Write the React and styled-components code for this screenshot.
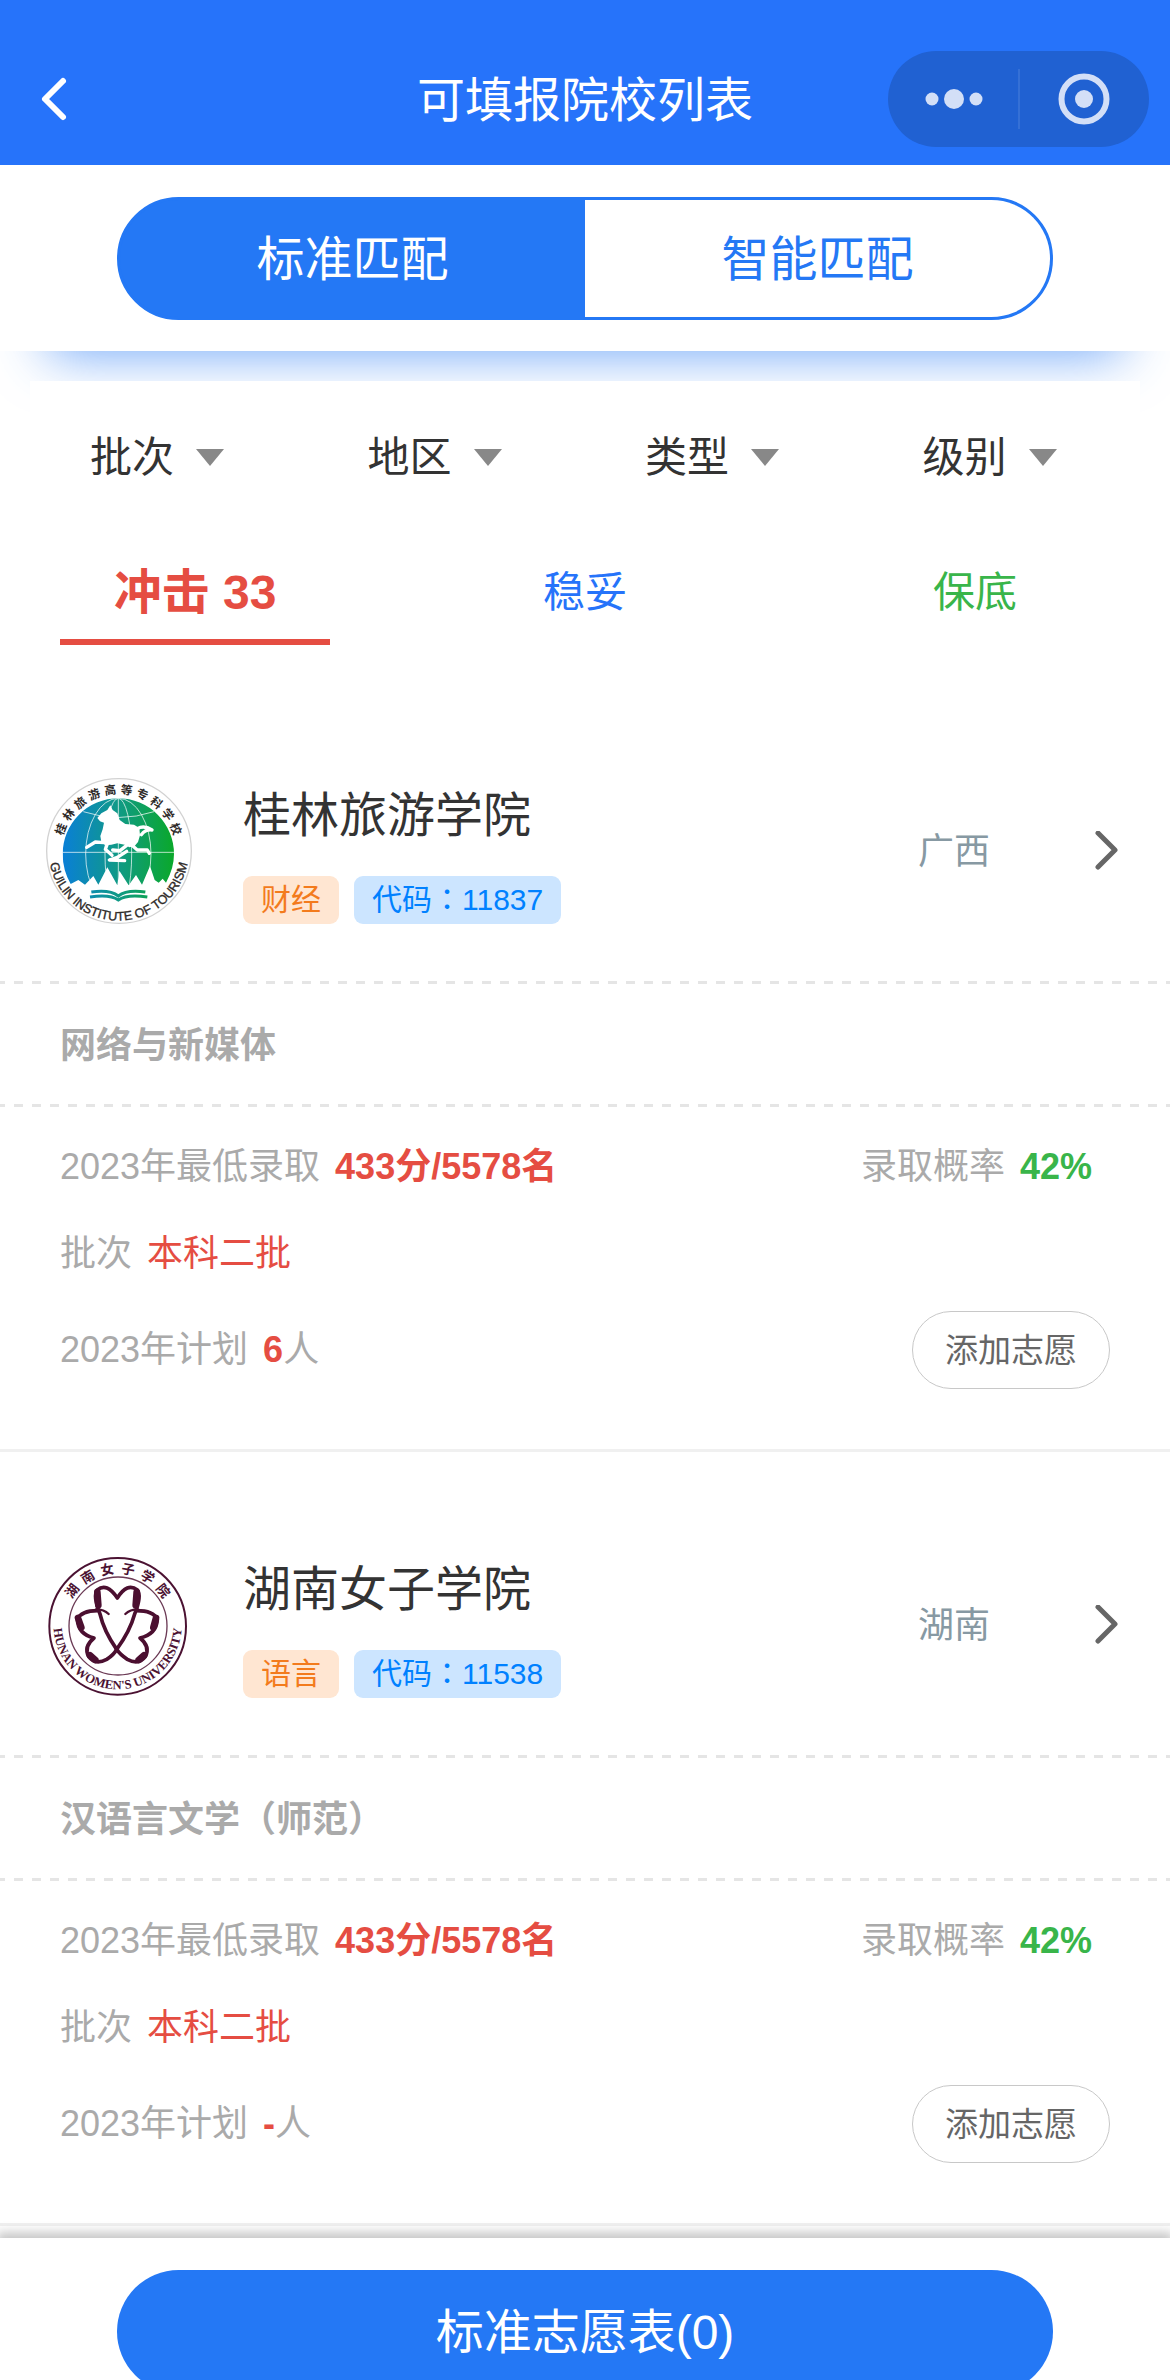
import React, { useState } from 'react';
import styled, { createGlobalStyle } from 'styled-components';

const GlobalStyle = createGlobalStyle`
  * {
    box-sizing: border-box;
  }
  body {
    margin: 0;
    background: #fff;
    color: #333;
    font-family: 'Liberation Sans', 'Noto Sans CJK SC', sans-serif;
    font-size: 36px;
    line-height: 1.5;
  }
  button,
  select {
    margin: 0;
    padding: 0;
    border: 0;
    background: none;
    color: inherit;
    font: inherit;
    cursor: pointer;
  }
  a {
    color: inherit;
    text-decoration: none;
  }
  h1,
  h2,
  h3 {
    margin: 0;
    font-weight: 400;
  }
  svg {
    display: block;
  }
`;

const Page = styled.div`
  display: flex;
  flex-direction: column;
  height: 100vh;
  overflow: hidden;
`;

const NavBar = styled.header`
  display: grid;
  grid-template-columns: 1fr auto 1fr;
  align-items: center;
  flex: none;
  height: 165px;
  padding: 33px 21px 0;
  background: #2673fa;
  color: #fff;
`;

const Title = styled.h1`
  padding-top: 3px;
  font-size: 48px;
  line-height: 72px;
`;

const BackButton = styled.button`
  justify-self: start;
  padding-left: 15px;
`;

const Capsule = styled.div`
  display: flex;
  justify-self: end;
  align-items: center;
  width: 261px;
  height: 96px;
  border-radius: 48px;
  background: #2061d2;
`;

const CapsuleButton = styled.button`
  display: flex;
  flex: 1;
  justify-content: center;
`;

const CapsuleLine = styled.span`
  width: 2px;
  height: 60px;
  background: #3570d6;
`;

const ModeBar = styled.div`
  flex: none;
  padding: 32px 10% 31px;
  background: #fff;
  box-shadow: 0 51px 54px -48px rgba(36, 120, 245, 0.66);
`;

const ModeSwitch = styled.div`
  display: flex;
  height: 123px;
  border: 3px solid #2478f5;
  border-radius: 62px;
  background: #2478f5;
  overflow: hidden;
`;

const ModeButton = styled.button`
  flex: 1;
  padding-top: 3px;
  font-size: 48px;
  background: ${p => (p.$active ? '#2478f5' : '#fff')};
  color: ${p => (p.$active ? '#fff' : '#2478f5')};
`;

const Content = styled.main`
  flex: 1;
  min-height: 0;
  padding-top: 30px;
  overflow-y: auto;
`;

const Filters = styled.div`
  display: grid;
  grid-template-columns: repeat(4, 1fr);
  align-items: center;
  height: 153px;
  margin: 0 30px;
  background: #fff;
`;

const FilterLabel = styled.label`
  display: flex;
  align-items: center;
  padding-left: 60px;
`;

const FilterSelect = styled.select`
  appearance: none;
  height: 63px;
  padding-right: 49px;
  font-size: 42px;
`;

const Caret = styled.span`
  margin-left: -28px;
  border: 14px solid transparent;
  border-top: 17px solid #888;
  border-bottom: 0;
  pointer-events: none;
`;

const Tabs = styled.div`
  display: grid;
  grid-template-columns: repeat(3, 1fr);
  margin: 9px 0 33px;
`;

const Tab = styled.button`
  justify-self: center;
  width: 270px;
  height: 102px;
  padding-top: 3px;
  border-bottom: 6px solid ${p => (p.$active ? p.$color : 'transparent')};
  color: ${p => p.$color};
  font-size: ${p => (p.$active ? 48 : 42)}px;
  font-weight: ${p => (p.$active ? 700 : 400)};
`;

const Card = styled.article`
  border-bottom: 3px solid #f0f0f0;
`;

const SchoolLink = styled.a`
  display: flex;
  align-items: center;
  padding: 99px 51px 54px 45px;
`;

const SchoolText = styled.div`
  flex: 1;
  margin-left: 48px;
`;

const SchoolName = styled.h2`
  font-size: 48px;
  line-height: 72px;
`;

const Tags = styled.div`
  display: flex;
  gap: 15px;
  margin-top: 24px;
`;

const Tag = styled.span`
  height: 48px;
  padding: 0 18px;
  border-radius: 9px;
  background: ${p => (p.$blue ? '#cce5ff' : '#ffe6d2')};
  color: ${p => (p.$blue ? '#0081ff' : '#f37b1d')};
  font-size: 30px;
  line-height: 48px;
`;

// the TC face keeps the full-width colon in the middle of its box
const Colon = styled.span`
  font-family: 'Noto Sans CJK TC', sans-serif;
  line-height: 1;
`;

const Region = styled.span`
  margin-right: 105px;
  color: #8799a3;
`;

const Dashes = styled.div`
  height: 3px;
  background: repeating-linear-gradient(
    90deg,
    #e5e5e5 0 5px,
    transparent 5px 14px,
    #e5e5e5 14px 18px
  );
`;

const Major = styled.h3`
  padding: 3px 60px 0;
  color: #aaa;
  font-size: 36px;
  font-weight: 700;
  line-height: 117px;
`;

const Details = styled.div`
  display: flex;
  flex-direction: column;
  gap: 30px;
  padding: 30px 60px 60px;
  color: #aaa;
`;

const DetailRow = styled.div`
  display: flex;
  align-items: center;
  justify-content: space-between;
  min-height: 57px;
  padding-top: ${p => (p.$action ? 0 : 3)}px;
`;

const Value = styled.span`
  margin-left: 15px;
  color: ${p => (p.$green ? '#39b54a' : '#e54d42')};
  font-weight: ${p => (p.$plain ? 400 : 700)};
`;

const Chance = styled.span`
  margin-right: 18px;
`;

const AddButton = styled.button`
  height: 78px;
  padding: 2px 32px 0;
  border: 1px solid #c8c8c8;
  border-radius: 39px;
  color: #666;
  font-size: 33px;
`;

const Footer = styled.footer`
  flex: none;
  height: 142px;
  padding: 32px 10% 0;
  background: #fff;
  box-shadow: 0 -3px 10px 3px #c8c8c8;
  overflow: hidden;
`;

const SubmitButton = styled.button`
  width: 100%;
  height: 123px;
  padding-top: 3px;
  border-radius: 62px;
  background: #2478f5;
  color: #fff;
  font-size: 48px;
`;

const RingText = ({ text, cx, cy, r, from, to, size }) =>
  [...text].map((char, i) => (
    <text
      key={char}
      x={cx}
      y={cy - r}
      fontSize={size}
      fontWeight="700"
      textAnchor="middle"
      transform={`rotate(${from + ((to - from) * i) / (text.length - 1)} ${cx} ${cy})`}
    >
      {char}
    </text>
  ));

const GuilinLogo = () => (
  <svg width="150" height="150" viewBox="45 51 450 450" aria-hidden="true">
    <defs>
      <linearGradient
        id="globe"
        gradientUnits="userSpaceOnUse"
        x1="98"
        x2="432"
        y1="0"
        y2="0"
      >
        <stop offset="0" stopColor="#0a7fd6" />
        <stop offset="0.5" stopColor="#109a86" />
        <stop offset="1" stopColor="#0aa82a" />
      </linearGradient>
      <clipPath id="globeClip">
        <path d="M122 372Q98 330 98 282A167 167 0 0 1 432 282Q432 325 408 368L398 356L386 368L374 360L360 318L336 374L318 345L296 376L268 332L262 376L232 322L205 374L190 348L165 374L145 360Z" />
      </clipPath>
      <path id="guilinArc" d="M56 272A210 210 0 0 0 476 272" />
    </defs>
    <circle cx="267" cy="273" r="217" fill="#fff" stroke="#d2d2d2" strokeWidth="4" />
    <g clipPath="url(#globeClip)">
      <rect x="95" y="110" width="340" height="275" fill="url(#globe)" />
      <g fill="none" stroke="#fff" strokeOpacity="0.7" strokeWidth="3">
        <path d="M98 277H432M265 115V390" />
        <path d="M160 155Q265 190 372 155" />
        <ellipse cx="265" cy="282" rx="98" ry="167" />
        <ellipse cx="265" cy="282" rx="40" ry="167" />
      </g>
    </g>
    <path
      fill="#fff"
      d="M241 136L248 150L262 160L269 180L286 192L312 194L328 204L330 226L324 246L314 258L298 262L284 254L262 250L244 254L226 256L214 246L211 228L218 208L222 188L210 184L202 174L214 160L232 150Z"
    />
    <g
      fill="none"
      stroke="#fff"
      strokeWidth="10"
      strokeLinecap="round"
      strokeLinejoin="round"
    >
      <path d="M322 206Q342 194 366 210Q346 208 334 224" />
      <path d="M306 256L322 270L352 270L358 280" />
      <path d="M290 256L270 272L248 270" />
      <path d="M222 248L196 246L170 262" />
      <path d="M232 252L226 268L246 286" />
      <path d="M290 274L262 292L238 300L284 302" />
    </g>
    <g fill="none" stroke="url(#globe)" strokeWidth="9">
      <path d="M184 396Q240 388 265 408Q290 388 346 396" />
      <path d="M180 411Q240 402 265 420Q290 402 352 411" />
    </g>
    <g fill="#2e2a28">
      <RingText text="桂林旅游高等专科学校" cx={265} cy={273} r={172} from={-69} to={69} size={35} />
      <text fontSize="38" textAnchor="middle" stroke="#2e2a28">
        <textPath href="#guilinArc" startOffset="50%">
          GUILIN INSTITUTE OF TOURISM
        </textPath>
      </text>
    </g>
  </svg>
);

const HunanLogo = () => (
  <svg width="150" height="150" viewBox="45 33 450 450" aria-hidden="true">
    <defs>
      <path id="hunanArc" d="M74 222A192 192 0 1 0 452 222" />
    </defs>
    <circle cx="263" cy="259" r="205" fill="#fff" stroke="#4b1232" strokeWidth="6" />
    <circle cx="264" cy="258" r="147" fill="none" stroke="#6b3a55" strokeWidth="4" />
    <g fill="none" stroke="#4b0f30" strokeLinecap="round" strokeLinejoin="round">
      <g strokeWidth="11">
        <path d="M260 328Q222 274 210 222Q188 168 202 150Q230 126 262 174Q292 126 322 150Q336 168 314 222Q300 274 260 328" />
        <path d="M202 212Q154 212 142 238Q144 282 192 294Q160 320 176 350Q196 376 230 358Q252 344 260 328" />
        <path d="M320 212Q370 212 382 238Q380 282 330 294Q362 320 346 350Q326 376 292 358Q270 344 260 328" />
      </g>
      <path strokeWidth="7" d="M198 208Q222 208 236 222M324 208Q300 208 286 222" />
      <path
        strokeWidth="20"
        d="M202 156L205 196M320 156L317 196M144 234L154 262M378 234L370 262M180 346L196 360M342 346L326 360"
      />
    </g>
    <g fill="#4b1232">
      <RingText text="湖南女子学院" cx={263} cy={259} r={159} from={-52} to={52} size={40} />
      <text
        fontFamily="Liberation Serif, serif"
        fontSize="38"
        fontWeight="700"
        textAnchor="middle"
      >
        <textPath href="#hunanArc" startOffset="50%">
          HUNAN WOMEN'S UNIVERSITY
        </textPath>
      </text>
    </g>
  </svg>
);

const filters = ['批次', '地区', '类型', '级别'];

const levels = [
  { name: '冲击', count: 33, color: '#e54d42' },
  { name: '稳妥', color: '#2673fa' },
  { name: '保底', color: '#39b54a' },
];

const schools = [
  {
    name: '桂林旅游学院',
    Logo: GuilinLogo,
    type: '财经',
    code: '11837',
    region: '广西',
    major: '网络与新媒体',
    plan: '6',
  },
  {
    name: '湖南女子学院',
    Logo: HunanLogo,
    type: '语言',
    code: '11538',
    region: '湖南',
    major: '汉语言文学（师范）',
    plan: '-',
  },
];

const SchoolCard = ({ school }) => {
  const { Logo } = school;
  return (
    <Card>
      <SchoolLink href={`#${school.code}`}>
        <Logo />
        <SchoolText>
          <SchoolName>{school.name}</SchoolName>
          <Tags>
            <Tag>{school.type}</Tag>
            <Tag $blue>
              代码<Colon>：</Colon>
              {school.code}
            </Tag>
          </Tags>
        </SchoolText>
        <Region>{school.region}</Region>
        <svg width="24" height="42" fill="none" stroke="#666" strokeWidth="5">
          <path d="M3 2L20 19L3 36" strokeLinecap="round" strokeLinejoin="round" />
        </svg>
      </SchoolLink>
      <Dashes />
      <Major>{school.major}</Major>
      <Dashes />
      <Details>
        <DetailRow>
          <span>
            2023年最低录取<Value>433分/5578名</Value>
          </span>
          <Chance>
            录取概率<Value $green>42%</Value>
          </Chance>
        </DetailRow>
        <DetailRow>
          <span>
            批次<Value $plain>本科二批</Value>
          </span>
        </DetailRow>
        <DetailRow $action>
          <span>
            2023年计划<Value>{school.plan}</Value>人
          </span>
          <AddButton type="button">添加志愿</AddButton>
        </DetailRow>
      </Details>
    </Card>
  );
};

const App = () => {
  const [mode, setMode] = useState('标准匹配');
  const [level, setLevel] = useState('冲击');

  return (
    <Page>
      <GlobalStyle />
      <NavBar>
        <BackButton type="button" aria-label="返回">
          <svg width="36" height="48" fill="none" stroke="#fff" strokeWidth="6">
            <path d="M27 6L9 24L27 42" strokeLinecap="round" strokeLinejoin="round" />
          </svg>
        </BackButton>
        <Title>可填报院校列表</Title>
        <Capsule>
          <CapsuleButton type="button" aria-label="更多">
            <svg width="60" height="24" fill="#d3dff7">
              <circle cx="9" cy="12" r="6.5" />
              <circle cx="31" cy="12" r="10" />
              <circle cx="53" cy="12" r="6.5" />
            </svg>
          </CapsuleButton>
          <CapsuleLine />
          <CapsuleButton type="button" aria-label="关闭">
            <svg width="54" height="54" fill="#d3dff7">
              <circle cx="27" cy="27" r="22.5" fill="none" stroke="#d3dff7" strokeWidth="6" />
              <circle cx="27" cy="27" r="9" />
            </svg>
          </CapsuleButton>
        </Capsule>
      </NavBar>
      <ModeBar>
        <ModeSwitch>
          {['标准匹配', '智能匹配'].map(m => (
            <ModeButton
              key={m}
              type="button"
              $active={m === mode}
              onClick={() => setMode(m)}
            >
              {m}
            </ModeButton>
          ))}
        </ModeSwitch>
      </ModeBar>
      <Content>
        <Filters>
          {filters.map(f => (
            <FilterLabel key={f}>
              <FilterSelect aria-label={f}>
                <option>{f}</option>
              </FilterSelect>
              <Caret />
            </FilterLabel>
          ))}
        </Filters>
        <Tabs>
          {levels.map(l => (
            <Tab
              key={l.name}
              type="button"
              $active={l.name === level}
              $color={l.color}
              onClick={() => setLevel(l.name)}
            >
              {l.name}
              {l.count && ` ${l.count}`}
            </Tab>
          ))}
        </Tabs>
        {schools.map(s => (
          <SchoolCard key={s.code} school={s} />
        ))}
      </Content>
      <Footer>
        <SubmitButton type="button">标准志愿表(0)</SubmitButton>
      </Footer>
    </Page>
  );
};

export default App;
